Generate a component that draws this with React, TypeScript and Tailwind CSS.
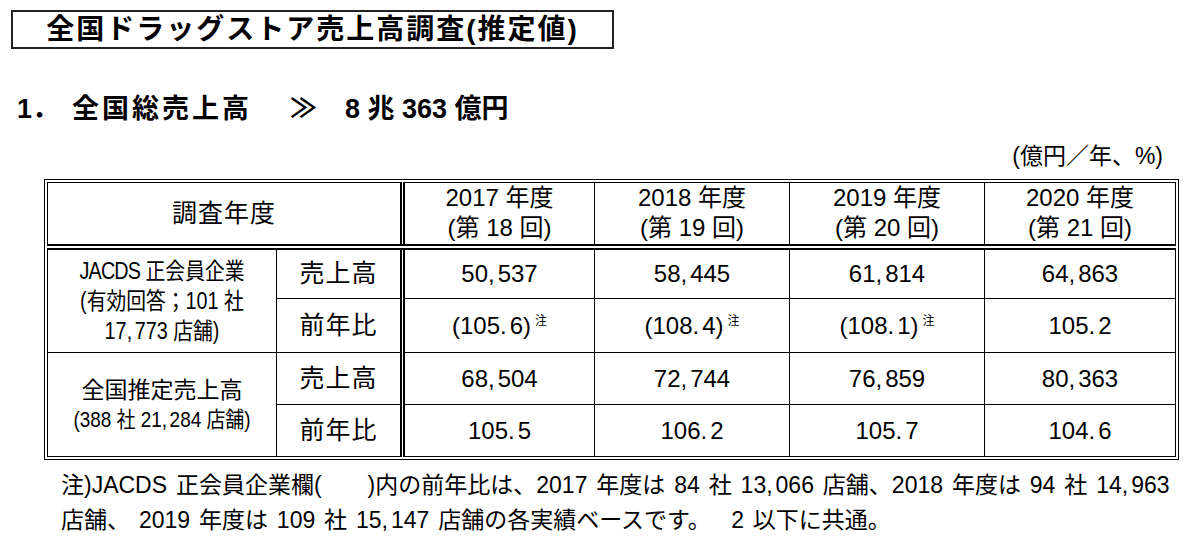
import React from 'react';

const FONT = "font-['Liberation_Sans','Noto_Sans_CJK_JP',sans-serif]";

// the source font leaves a gap after , and . in numbers
const Num = ({ v }: { v: string }) => {
  const parts = v.split(/([,.])/);
  return (
    <>
      {parts.map((p, i) =>
        p === ',' || p === '.' ? (
          <span key={i} className="mr-[3px]">{p}</span>
        ) : (
          <React.Fragment key={i}>{p}</React.Fragment>
        )
      )}
    </>
  );
};

const Note = ({ v }: { v: string }) => (
  <span className="whitespace-nowrap">
    <Num v={v} />
    <span className="inline-block ml-[4px] text-[12px] leading-none -translate-y-[9px]">注</span>
  </span>
);

const years = [
  { y: '2017', n: '18' },
  { y: '2018', n: '19' },
  { y: '2019', n: '20' },
  { y: '2020', n: '21' },
];

const jacdsSales = ['50,537', '58,445', '61,814', '64,863'];
const jacdsYoy = ['(105.6)', '(108.4)', '(108.1)', '105.2'];
const allSales = ['68,504', '72,744', '76,859', '80,363'];
const allYoy = ['105.5', '106.2', '105.7', '104.6'];

export default function App() {
  const cell = 'border border-black border-double text-center align-middle p-0';
  const yearCell = 'border border-black text-center align-middle p-0 text-[24px]';

  return (
    <div className={`w-[1200px] h-[556px] bg-white text-black overflow-hidden ${FONT}`}>
      {/* Title */}
      <div className="ml-[11px] mt-[10px] w-[603px] h-[39px] border-2 border-[#222] flex items-center justify-center">
        <span className="text-[28px] font-bold tracking-[2px] leading-none">
          全国ドラッグストア売上高調査(推定値)
        </span>
      </div>

      {/* Section heading */}
      <div className="mt-[42px] ml-[17px] h-[36px] flex items-center text-[27px] font-bold leading-none">
        <span className="w-[55px]">1．</span>
        <span className="tracking-[3px]">全国総売上高</span>
        <span className="ml-[38px]">≫</span>
        <span className="ml-[28px]">8 兆 363 億円</span>
      </div>

      {/* Unit */}
      <div className="mt-[16px] h-[26px] pr-[37px] flex justify-end items-center text-[23px] leading-none">
        (億円／年、%)
      </div>

      {/* Table */}
      <div className="ml-[44px] mt-[10px] w-[1135px] border border-black p-[2px]">
        <table className="w-full table-fixed border-collapse border border-black">
          <colgroup>
            <col className="w-[229px]" />
            <col className="w-[126px]" />
            <col className="w-[192px]" />
            <col className="w-[195px]" />
            <col className="w-[195px]" />
            <col />
          </colgroup>
          <tbody className="text-[24px] leading-[29px]">
            <tr className="h-[64px]">
              <td colSpan={2} className={`${cell} border-b-[6px] border-r-[5px] text-[25px] tracking-[1px]`}>
                調査年度
              </td>
              {years.map((y) => (
                <td key={y.y} className={`${cell} border-b-[6px] text-[24px] leading-[30px]`}>
                  <div>{y.y} 年度</div>
                  <div>(第 {y.n} 回)</div>
                </td>
              ))}
            </tr>

            <tr className="h-[52px]">
              <td rowSpan={2} className={`${cell} text-[23px] leading-[30px]`}>
                <div className="scale-x-[0.86] whitespace-nowrap">
                  <div><span className="tracking-[-1px]">JACDS</span> 正会員企業</div>
                  <div>(有効回答；101 社</div>
                  <div><Num v="17,773" /> 店舗)</div>
                </div>
              </td>
              <td className={`${cell} border-r-[5px] text-[25px] tracking-[1px]`}>売上高</td>
              {jacdsSales.map((v) => (
                <td key={v} className={yearCell}><Num v={v} /></td>
              ))}
            </tr>
            <tr className="h-[54px]">
              <td className={`${cell} border-r-[5px] text-[25px] tracking-[1px]`}>前年比</td>
              {jacdsYoy.map((v, i) => (
                <td key={v} className={yearCell}>
                  {i < 3 ? <Note v={v} /> : <Num v={v} />}
                </td>
              ))}
            </tr>

            <tr className="h-[52px]">
              <td rowSpan={2} className={`${cell} leading-[30px]`}>
                <div className="text-[23px]">全国推定売上高</div>
                <div className="text-[22px] scale-x-[0.86] whitespace-nowrap">(388 社 <Num v="21,284" /> 店舗)</div>
              </td>
              <td className={`${cell} border-r-[5px] text-[25px] tracking-[1px]`}>売上高</td>
              {allSales.map((v) => (
                <td key={v} className={yearCell}><Num v={v} /></td>
              ))}
            </tr>
            <tr className="h-[52px]">
              <td className={`${cell} border-r-[5px] text-[25px] tracking-[1px]`}>前年比</td>
              {allYoy.map((v) => (
                <td key={v} className={yearCell}><Num v={v} /></td>
              ))}
            </tr>
          </tbody>
        </table>
      </div>

      {/* Footnote */}
      <div className="ml-[61px] mt-[8px] text-[23px] leading-[35px] whitespace-nowrap [word-spacing:2.5px]">
        <div>
          注)JACDS 正会員企業欄(　　)内の前年比は、2017 年度は 84 社 <Num v="13,066" /> 店舗、2018 年度は 94 社 <Num v="14,963" />
        </div>
        <div>
          店舗、 2019 年度は 109 社 <Num v="15,147" /> 店舗の各実績ベースです。　 2 以下に共通。
        </div>
      </div>
    </div>
  );
}
